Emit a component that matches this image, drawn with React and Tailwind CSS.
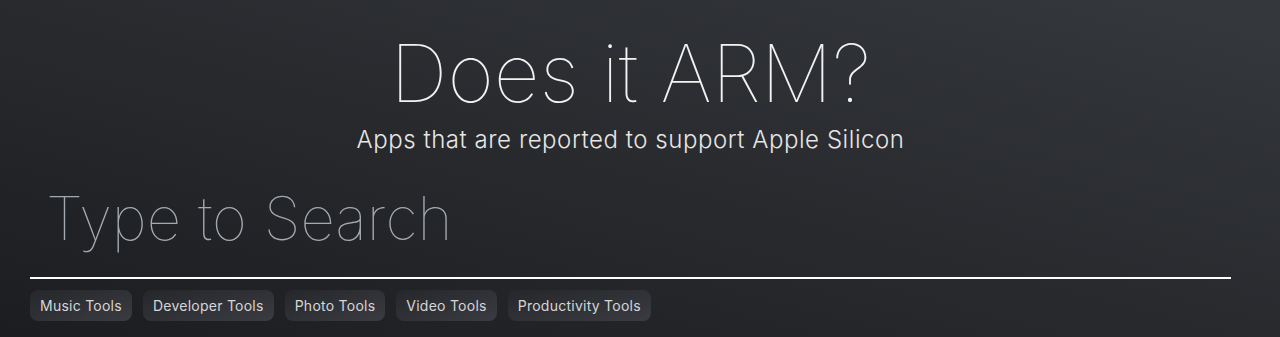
import React from 'react';

const categories = ['Music Tools', 'Developer Tools', 'Photo Tools', 'Video Tools', 'Productivity Tools'];

const App = () => {
  return (
    <div
      className="w-full h-[337px] overflow-hidden bg-linear-to-tr from-[#1c1d20] to-[#35383d] text-white"
      style={{ fontFamily: 'Inter, "Noto Sans", sans-serif' }}
    >
      <div className="ml-[30px] w-[1201px] flex flex-col">
        {/* Header */}
        <div className="pt-[33px] flex flex-col items-center">
          <h1 className="text-[80px] leading-none font-thin text-[#f2f2f2]">Does it ARM?</h1>
          <p className="mt-[12px] text-[24px] leading-[30px] font-light tracking-[0.55px] text-[#e6e6e6]">
            Apps that are reported to support Apple Silicon
          </p>
        </div>

        {/* Search */}
        <div className="mt-[4px] border-b-2 border-white">
          <input
            type="text"
            placeholder="Type to Search"
            className="w-full h-[118px] bg-transparent outline-none px-[16px] text-[60px] font-thin text-white placeholder:text-[#a3a9b1]"
          />
        </div>

        {/* Category filters */}
        <div className="mt-[11px] flex items-center gap-[11px]">
          {categories.map((cat) => (
            <button
              key={cat}
              className="h-[31px] px-[10px] rounded-lg bg-linear-to-br from-[#26272b] to-[#3b3c41] text-[14px] tracking-[0.25px] text-[#d6d6d8] leading-none"
            >
              {cat}
            </button>
          ))}
        </div>
      </div>
    </div>
  );
};

export default App;
